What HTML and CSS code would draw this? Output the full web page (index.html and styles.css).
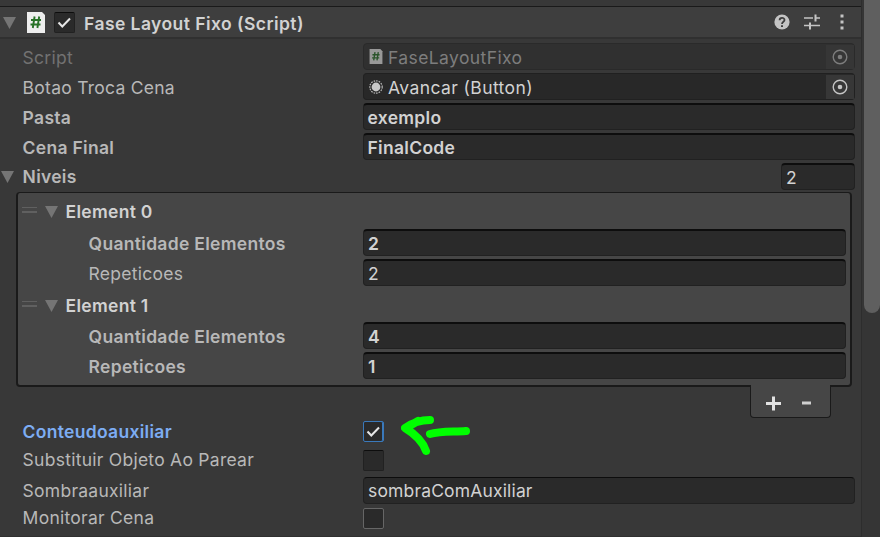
FILE: index.html
```html
<!DOCTYPE html>
<html lang="pt">
<head>
<meta charset="utf-8">
<title>Inspector</title>
<link rel="stylesheet" href="styles.css">
</head>
<body>
<svg class="defs" width="0" height="0">
  <symbol id="tick" viewBox="0 0 21 21"><path d="M4.5 10.5 8.3 14.5 16 6.5" fill="none" stroke="#e6e6e6" stroke-width="2"/></symbol>
  <symbol id="target" viewBox="0 0 16 16"><circle cx="8" cy="8" r="6.8" fill="none" stroke="currentColor" stroke-width="1.4"/><circle cx="8" cy="8" r="2.3" fill="currentColor"/></symbol>
  <symbol id="fold" viewBox="0 0 13 12"><path d="M0 0H13L6.5 12Z" fill="currentColor"/></symbol>
  <symbol id="script" viewBox="0 0 18 21"><path d="M0 0H15L18 3V21H0Z" fill="#eee"/><path d="M7.6 4.5 5.8 16M12.2 4.5 10.4 16M4 8H14M3.5 12.5H13.5" stroke="#287228" stroke-width="1.9" fill="none"/></symbol>
</svg>
<div class="window">
  <main class="inspector">
    <header class="head">
      <svg class="fold"><use href="#fold"/></svg>
      <svg class="script"><use href="#script"/></svg>
      <span class="check"><svg><use href="#tick"/></svg></span>
      <h1>Fase Layout Fixo (Script)</h1>
      <svg class="help" viewBox="0 0 16 16"><circle cx="8" cy="8" r="7.6" fill="#c4c4c4"/><path d="M5.6 6.2C5.6 3 10.5 3.1 10.5 6C10.5 7.8 8 7.7 8 10" fill="none" stroke="#3e3e3e" stroke-width="1.8"/><path d="M7 11.2H9V13H7Z" fill="#3e3e3e"/></svg>
      <svg class="preset" viewBox="0 0 16 16"><path d="M0 4H9M12 4H16M0 11.5H5M7 11.5H16" stroke="#c4c4c4" stroke-width="1.7"/><path d="M11.5 0.5V7.5M6 8.5V15.5" stroke="#c4c4c4" stroke-width="2"/></svg>
      <svg class="more" viewBox="0 0 4 16"><path d="M.5 .5H3.5V3.5H.5ZM.5 6.5H3.5V9.5H.5ZM.5 12.5H3.5V15.5H.5Z" fill="#c4c4c4"/></svg>
    </header>
    <section class="props">
      <div class="row off"><span class="label">Script</span><div class="field object"><svg class="mini"><use href="#script"/></svg><span>FaseLayoutFixo</span><span class="pick"><svg><use href="#target"/></svg></span></div></div>
      <div class="row"><span class="label">Botao Troca Cena</span><div class="field object"><svg class="radio" viewBox="0 0 14 14"><circle cx="7" cy="7" r="6.2" fill="none" stroke="#bbb" stroke-width="1.2" stroke-dasharray="1.6 1"/><circle cx="7" cy="7" r="4.4" fill="#c8c8c8"/></svg><span>Avancar (Button)</span><span class="pick"><svg><use href="#target"/></svg></span></div></div>
      <div class="row bold"><span class="label">Pasta</span><div class="field">exemplo</div></div>
      <div class="row bold"><span class="label">Cena Final</span><div class="field">FinalCode</div></div>
      <div class="row size"><svg class="fold"><use href="#fold"/></svg><span class="label bold">Niveis</span><div class="field">2</div></div>
    </section>
    <section class="list">
      <div class="element"><i class="grip"></i><svg class="fold"><use href="#fold"/></svg><span class="bold">Element 0</span></div>
      <div class="row bold"><span class="label">Quantidade Elementos</span><div class="field">2</div></div>
      <div class="row"><span class="label">Repeticoes</span><div class="field">2</div></div>
      <div class="element next"><i class="grip"></i><svg class="fold"><use href="#fold"/></svg><span class="bold">Element 1</span></div>
      <div class="row bold"><span class="label">Quantidade Elementos</span><div class="field">4</div></div>
      <div class="row bold"><span class="label">Repeticoes</span><div class="field">1</div></div>
    </section>
    <div class="foot">
      <svg viewBox="0 0 15 15"><path d="M0 7.5H15M7.5 .5V14.5" stroke="#e2e2e2" stroke-width="3"/></svg>
      <svg viewBox="0 0 15 15"><path d="M3 7H12" stroke="#cfcfcf" stroke-width="3"/></svg>
    </div>
    <section class="props tail">
      <div class="row toggle bold active"><span class="label">Conteudoauxiliar</span><span class="check"><svg><use href="#tick"/></svg></span>
        <svg class="arrow" viewBox="0 0 70 44"><path d="M29 6C21 6 11 9 4 14C14 20 22 28 25 37M5 14 17 7M29 20C39 17 52 18 65 17" fill="none" stroke="#0f0" stroke-width="8" stroke-linecap="round" stroke-linejoin="round"/></svg></div>
      <div class="row toggle second"><span class="label">Substituir Objeto Ao Parear</span><span class="check"></span></div>
      <div class="row shadow"><span class="label">Sombraauxiliar</span><div class="field">sombraComAuxiliar</div></div>
      <div class="row toggle last"><span class="label">Monitorar Cena</span><span class="check"></span></div>
    </section>
  </main>
  <aside class="scroll"><div class="thumb"></div></aside>
</div>
</body>
</html>
```
FILE: styles.css
```css
* { box-sizing: border-box; }
body { margin: 0; background: #fff; font: 17.5px/27px Inter, "Liberation Sans", sans-serif; color: #b8b8b8; overflow: hidden; }
svg { display: block; flex: none; }
.defs { position: absolute; }
.window { display: flex; width: 880px; height: 537px; background: #383838; }
.inspector { width: 861px; padding-top: 6px; border-bottom: 1px solid #303030; }
.scroll { width: 19px; background: #353535; border-left: 1px solid #2d2d2d; padding-left: 2px; }
.thumb { width: 16px; height: 313px; background: #5f5f5f; border-radius: 0 0 8px 8px; }
.head { display: flex; align-items: center; height: 33px; background: #3e3e3e; border-top: 1px solid #1a1a1a; border-bottom: 2px solid #303030; padding: 0 17px 0 3px; }
.head h1 { margin: 2px auto 0 9px; font-size: 17.5px; font-weight: 600; letter-spacing: .44px; color: #d2d2d2; }
.fold { width: 13px; height: 12px; color: #757575; }
.head .fold { margin-top: 2px; }
.script { width: 18px; height: 21px; margin-left: 11px; }
.head .check { margin-left: 9px; }
.help { width: 16px; height: 16px; margin-right: -1px; }
.preset { width: 16px; height: 16px; margin-left: 15px; margin-right: 1px; }
.more { width: 4px; height: 16px; margin-left: 19px; }
.check { display: block; width: 21px; height: 21px; background: #2a2a2a; border: 1px solid #212121; border-top-color: #0d0d0d; border-radius: 2px; }
.check svg { width: 21px; height: 21px; margin: -1px; }
.bold { font-weight: 600; }
.props { padding: 4px 6px 0 22px; display: flex; flex-direction: column; gap: 3px; }
.row { display: flex; height: 27px; letter-spacing: .26px; }
.row.bold, .element .bold { letter-spacing: .3px; }
.label { width: 341px; white-space: nowrap; margin-top: 1px; padding-left: .6px; }
.field { flex: 1; height: 27px; padding-left: 3.5px; background: #2a2a2a; border: 1px solid #212121; border-top: 2px solid #0d0d0d; border-radius: 4px; color: #d2d2d2; line-height: 25px; }
.object { display: flex; border-top: 1px solid #202020; background: #282828; padding-left: 5px; align-items: center; letter-spacing: .4px; line-height: 27px; }
.object .pick { margin-left: auto; height: 24px; width: 28px; background: #373737; padding: 4px 6px; color: #c4c4c4; }
.object > span:not(.pick) { padding-top: 1px; }
.pick svg { width: 16px; height: 16px; }
.mini { width: 14px; height: 15px; margin-right: 5px; opacity: .55; }
.radio { width: 14px; height: 14px; margin-right: 5px; }
.off { color: #727272; }
.off .field { background: #303030; border-color: #2a2a2a; color: #7d7d7d; }
.off .pick { color: #7d7d7d; background: #363636; }
.size { margin-left: -21px; }
.size .fold { margin: 8px 8px 0 0; }
.size .label { width: auto; margin-right: auto; margin-top: 0; }
.size .field { flex: none; width: 74px; padding-left: 4px; }
.list { margin: 2px 9px 0 16px; height: 195px; background: #464646; border: 2px solid #1a1a1a; border-top-width: 1px; border-radius: 4px; padding-right: 4px; }
.element { display: flex; align-items: center; height: 36px; padding: 1px 0 0 4px; color: #d2d2d2; }
.element.next { height: 33px; padding-top: 0; }
.element.next .bold { margin-top: -1px; }
.grip { width: 15px; height: 6px; border: solid #606060; border-width: 1px 0 2px; margin-top: -3px; }
.element .fold { margin: 1px 7.5px 0 8px; }
.list .row { padding-left: 70px; margin-bottom: 3px; }
.list .label { width: 275px; }
.list .field { padding-left: 4px; }
.foot { display: flex; gap: 18px; width: 81px; height: 33px; margin: -2px 0 0 750px; padding: 11px 15px; background: #464646; border: 1px solid #1a1a1a; border-top: 0; border-radius: 0 0 4px 4px; position: relative; }
.foot svg { width: 15px; height: 15px; }
.tail { padding-top: 3px; gap: 0; }
.toggle { height: 21px; line-height: 21px; }
.toggle .label { margin-top: -1px; }
.active .check { border-color: #3a79bb; box-shadow: inset -1px 0 #3a79bb; }
.active .label { color: #7dadf3; margin-top: 0; }
.arrow { width: 70px; height: 44px; margin: -7px 0 -16px 17px; }
.second { margin-top: 8px; }
.shadow { margin-top: 6px; }
.shadow .label { margin-top: 0; }
.shadow .field { border-top-width: 1px; line-height: 26px; padding-left: 4px; letter-spacing: .16px; }
.last { margin-top: 4px; }
.last .check { border-color: #666; }
```
